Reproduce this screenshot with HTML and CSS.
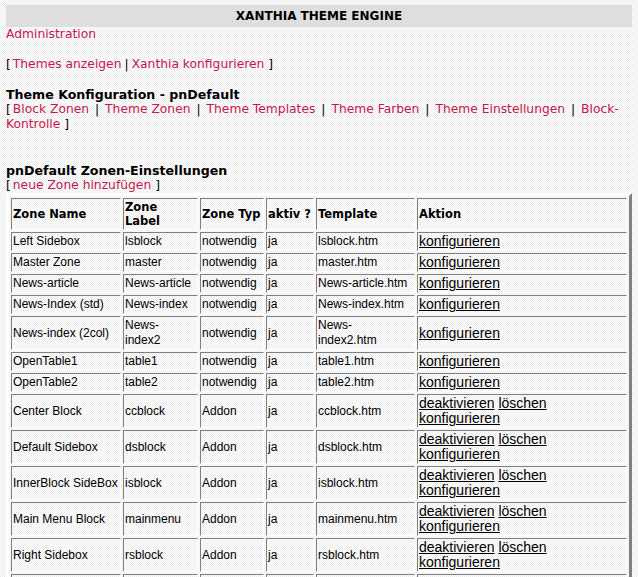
FILE: index.html
```html
<!DOCTYPE html>
<html>
<head>
<meta charset="utf-8">
<title>Xanthia Theme Engine</title>
<link rel="stylesheet" href="styles.css">
</head>
<body>
<div class="titlebar">XANTHIA THEME ENGINE</div>
<div class="line"><a class="red" href="#">Administration</a></div>
<div class="line gap1"><span class="br">[</span><a class="red" href="#">Themes anzeigen</a><span class="sep">|</span><a class="red" href="#">Xanthia konfigurieren</a> <span class="br">]</span></div>
<h2 class="heading gap1">Theme Konfiguration - pnDefault</h2>
<div class="line"><span class="br">[</span><a class="red" href="#">Block Zonen</a> <span class="pipe">|</span> <a class="red" href="#">Theme Zonen</a> <span class="pipe">|</span> <a class="red" href="#">Theme Templates</a> <span class="pipe">|</span> <a class="red" href="#">Theme Farben</a> <span class="pipe">|</span> <a class="red" href="#">Theme Einstellungen</a> <span class="pipe">|</span> <a class="red" href="#">Block-Kontrolle</a> <span class="br">]</span></div>
<h2 class="heading gap2">pnDefault Zonen-Einstellungen</h2>
<div class="line"><span class="br">[</span><a class="red" href="#">neue Zone hinzufügen</a> <span class="br">]</span></div>
<table class="zones">
<thead>
<tr>
<th class="c1">Zone Name</th>
<th class="c2">Zone<br>Label</th>
<th class="c3">Zone Typ</th>
<th class="c4">aktiv ?</th>
<th class="c5">Template</th>
<th class="c6">Aktion</th>
</tr>
</thead>
<tbody>
<tr><td>Left Sidebox</td><td>lsblock</td><td>notwendig</td><td>ja</td><td>lsblock.htm</td><td class="act"><a href="#">konfigurieren</a></td></tr>
<tr><td>Master Zone</td><td>master</td><td>notwendig</td><td>ja</td><td>master.htm</td><td class="act"><a href="#">konfigurieren</a></td></tr>
<tr><td>News-article</td><td>News-article</td><td>notwendig</td><td>ja</td><td>News-article.htm</td><td class="act"><a href="#">konfigurieren</a></td></tr>
<tr><td>News-Index (std)</td><td>News-index</td><td>notwendig</td><td>ja</td><td>News-index.htm</td><td class="act"><a href="#">konfigurieren</a></td></tr>
<tr><td>News-index (2col)</td><td>News-<br>index2</td><td>notwendig</td><td>ja</td><td>News-<br>index2.htm</td><td class="act"><a href="#">konfigurieren</a></td></tr>
<tr><td>OpenTable1</td><td>table1</td><td>notwendig</td><td>ja</td><td>table1.htm</td><td class="act"><a href="#">konfigurieren</a></td></tr>
<tr><td>OpenTable2</td><td>table2</td><td>notwendig</td><td>ja</td><td>table2.htm</td><td class="act"><a href="#">konfigurieren</a></td></tr>
<tr><td>Center Block</td><td>ccblock</td><td>Addon</td><td>ja</td><td>ccblock.htm</td><td class="act"><a href="#">deaktivieren</a> <a href="#">löschen</a><br><a href="#">konfigurieren</a></td></tr>
<tr><td>Default Sidebox</td><td>dsblock</td><td>Addon</td><td>ja</td><td>dsblock.htm</td><td class="act"><a href="#">deaktivieren</a> <a href="#">löschen</a><br><a href="#">konfigurieren</a></td></tr>
<tr><td>InnerBlock SideBox</td><td>isblock</td><td>Addon</td><td>ja</td><td>isblock.htm</td><td class="act"><a href="#">deaktivieren</a> <a href="#">löschen</a><br><a href="#">konfigurieren</a></td></tr>
<tr><td>Main Menu Block</td><td>mainmenu</td><td>Addon</td><td>ja</td><td>mainmenu.htm</td><td class="act"><a href="#">deaktivieren</a> <a href="#">löschen</a><br><a href="#">konfigurieren</a></td></tr>
<tr><td>Right Sidebox</td><td>rsblock</td><td>Addon</td><td>ja</td><td>rsblock.htm</td><td class="act"><a href="#">deaktivieren</a> <a href="#">löschen</a><br><a href="#">konfigurieren</a></td></tr>
<tr><td>Top Sidebox</td><td>tsblock</td><td>Addon</td><td>ja</td><td>tsblock.htm</td><td class="act"><a href="#">deaktivieren</a> <a href="#">löschen</a><br><a href="#">konfigurieren</a></td></tr>
</tbody>
</table>
</body>
</html>
```
FILE: styles.css
```css
html {
  background: repeating-conic-gradient(#ffffff 0 25%, #ececec 0 50%) 0 0 / 2px 2px;
}

body {
  margin: 5px 6px;
  font-family: "DejaVu Sans", Verdana, sans-serif;
  font-size: 12px;
  line-height: 15px;
  color: #000;
}

.titlebar {
  height: 22px;
  line-height: 22px;
  background: #dedede;
  text-align: center;
  font-weight: bold;
  font-size: 12px;
  color: #000;
}

.line {
  margin: 0;
  font-size: 12.3px;
}

.gap1 {
  margin-top: 15px;
}

.gap2 {
  margin-top: 31px;
}

.heading {
  margin-bottom: 0;
  font-size: 12.6px;
  font-weight: bold;
  line-height: 15px;
}

a.red {
  color: #c8174a;
  text-decoration: none;
}

.br {
  color: #000;
  margin: 0 2px 0 0;
}

.sep {
  margin: 0 3px;
}

.pipe {
  margin: 0 2px;
}

.zones {
  width: 626px;
  table-layout: fixed;
  border-collapse: separate;
  border-spacing: 2px;
  border: 3px solid;
  border-color: #ffffff #808080 #808080 #ffffff;
  font-family: "Liberation Sans", Arial, sans-serif;
  font-size: 12px;
}

.zones th,
.zones td {
  box-sizing: border-box;
  border: 1px solid;
  border-color: #808080 #ffffff #ffffff #808080;
  padding: 1px;
  text-align: left;
  vertical-align: middle;
  white-space: nowrap;
  line-height: 15px;
  color: #000;
}

.zones th {
  font-family: "DejaVu Sans", Verdana, sans-serif;
  font-weight: bold;
  font-size: 11.5px;
  line-height: 14px;
}

.zones td.act {
  white-space: normal;
  font-size: 14px;
  line-height: 15px;
}

.zones .act a {
  color: #000;
  text-decoration: underline;
}

.c1 { width: 110px; }
.c2 { width: 75px; }
.c3 { width: 64px; }
.c4 { width: 48px; }
.c5 { width: 99px; }
.c6 { width: 210px; }
```
